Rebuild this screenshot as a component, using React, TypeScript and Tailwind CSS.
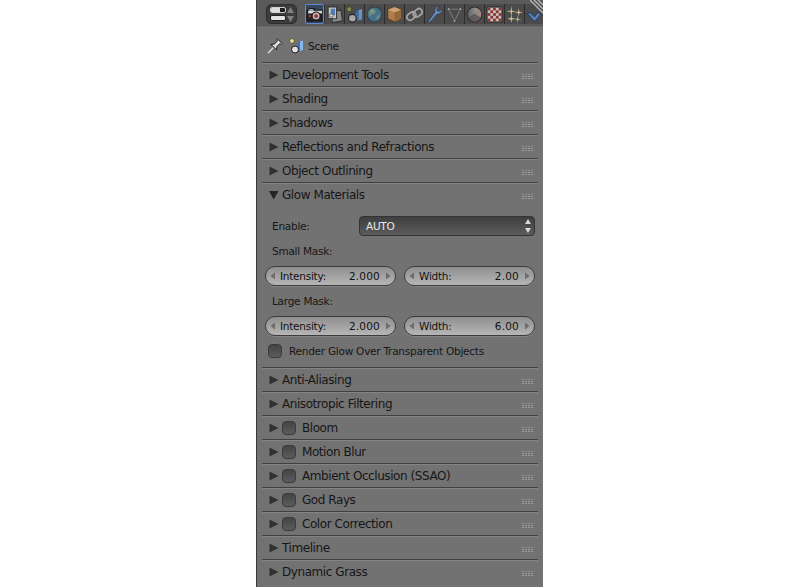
import React from "react";

const Tri = ({ open }: { open?: boolean }) => (
  <svg width="10" height="10" viewBox="0 0 10 10" className="shrink-0">
    {open ? <path d="M0 1 H9.5 L4.7 9.5 Z" fill="#262626" /> : <path d="M0.5 0.5 V9.5 L9.5 5 Z" fill="#303030" />}
  </svg>
);

const Grip = () => (
  <svg width="11" height="5" viewBox="0 0 11 5" className="shrink-0 mt-[3px]">
    {[0, 3, 6, 9].map((x) =>
      [0, 2, 4].map((y) => <rect key={x + "-" + y} x={x} y={y} width="2" height="1" fill="#a4a4a4" opacity={y === 0 ? 0.55 : 0.85} />)
    )}
  </svg>
);

const Check = ({ className = "" }: { className?: string }) => (
  <span className={"block w-[14px] h-[14px] rounded-[4px] border border-[#3a3a3a] bg-gradient-to-b from-[#444444] to-[#5c5c5c] shrink-0 " + className} />
);

const Row = ({ label, check, open }: { label: string; check?: boolean; open?: boolean }) => (
  <div className="border-t border-[#404040] shadow-[inset_0_1px_0_#848484] h-[24px] flex items-center pl-[7px] pr-[5px] mx-[5px] shrink-0">
    <Tri open={open} />
    {check ? <Check className="ml-[3px] mr-[6px]" /> : <span className="w-[3px]" />}
    <span className="text-[12px] leading-none text-[#161616] flex-1 tracking-[-0.43px] whitespace-nowrap">{label}</span>
    <Grip />
  </div>
);

const Num = ({ label, value }: { label: string; value: string }) => (
  <div className="flex-1 h-[20px] rounded-[10px] border border-[#3c3c3c] bg-gradient-to-b from-[#8f8f8f] to-[#b6b6b6] flex items-center px-[4px] text-[#111] shadow-[0_1px_0_#858585]">
    <svg width="6" height="8" viewBox="0 0 6 8" className="shrink-0"><path d="M5 0.5 V7.5 L0.5 4 Z" fill="#6c6c6c" /></svg>
    <span className="ml-[4px] flex-1 pt-[1px]">{label}</span>
    <span className="pt-[1px] tracking-[0.2px]">{value}</span>
    <svg width="6" height="8" viewBox="0 0 6 8" className="shrink-0 ml-[5px]"><path d="M1 0.5 V7.5 L5.5 4 Z" fill="#6c6c6c" /></svg>
  </div>
);

const SceneIcon = () => (
  <svg width="16" height="16" viewBox="0 0 16 16">
    <circle cx="3" cy="3" r="2.4" fill="#e4e4a0" stroke="#5a5a2c" strokeWidth="1" />
    <path d="M8 7 L10 4 L14 2.5 V12 L9 14 Z" fill="#3f70b4" />
    <path d="M11 3.6 L14 2.5 V12 L11 13 Z" fill="#8cb6e8" />
    <circle cx="6" cy="11.5" r="3.5" fill="#e0e0e0" stroke="#1c1c1c" strokeWidth="1" />
  </svg>
);

const tabs: React.ReactNode[] = [
  <g key="cam">
    <path d="M1 4 H3 V2.5 H8 V4 H15 V14 H1 Z" fill="#262626" stroke="#141414" />
    <rect x="2" y="4.5" width="13" height="2.5" fill="#d9d9d9" />
    <rect x="3" y="3" width="4" height="1.5" fill="#bbbbbb" />
    <circle cx="9.5" cy="9.5" r="3.8" fill="#d0aeb0" stroke="#161616" />
    <circle cx="9.5" cy="9.5" r="1.8" fill="#7c3a4c" />
    <rect x="2.5" y="8.5" width="2" height="2" fill="#b53a3a" />
  </g>,
  <g key="render">
    <path d="M5 5 L14 4 L15.5 14 L6 15.5 Z" fill="#8c8c8c" stroke="#333" />
    <path d="M2 1 H10 V12 H2 Z" fill="#c4c4c4" stroke="#333" />
    <rect x="4.5" y="2.5" width="4" height="6" fill="#4f7cb8" />
    <circle cx="5" cy="9" r="1.7" fill="#dcdcdc" stroke="#333" strokeWidth=".6" />
  </g>,
  <g key="scene">
    <circle cx="3" cy="3" r="2.4" fill="#87875e" stroke="#4a4a30" />
    <path d="M8.5 7 L11 4 L15 3 V12.5 L10.5 14 Z" fill="#3f6a9e" />
    <path d="M12 3.8 L15 3 V12.5 L12 13.4 Z" fill="#6e95c2" />
    <circle cx="6" cy="11.5" r="3.6" fill="#a8a8a8" stroke="#222" />
  </g>,
  <g key="world">
    <circle cx="8" cy="8" r="7" fill="#46718e" stroke="#2e4050" />
    <path d="M4 3 C7 2 10 3 9 6 C7 9 5 7 4 10 C2 8 2 5 4 3 Z" fill="#6a8a72" />
    <path d="M10 9 L13 8 L12 12 L10 13 Z" fill="#708e74" />
    <circle cx="6" cy="5" r="1.5" fill="#9fc0c8" opacity=".4" />
  </g>,
  <g key="cube">
    <path d="M8 1 L14.5 3.5 V12 L8 15 L1.5 12 V3.5 Z" fill="#b17c4c" stroke="#4c3a26" />
    <path d="M8 1 L14.5 3.5 L8 6 L1.5 3.5 Z" fill="#cda078" />
    <path d="M8 6 V15 L14.5 12 V3.5 Z" fill="#95683a" />
  </g>,
  <g key="link" fill="none" stroke="#a4a4a4" strokeWidth="1.7">
    <rect x="0.5" y="6.5" width="9" height="6" rx="3" transform="rotate(-38 5 9.5)" />
    <rect x="6.5" y="3.5" width="9" height="6" rx="3" transform="rotate(-38 11 6.5)" />
  </g>,
  <g key="wrench">
    <path d="M2 14.5 L3.5 15.5 L10.5 7.5 C13 8 15.5 6 15 3 L12.5 5 L10.5 4.5 L10.5 2.5 L12.5 0.5 C9.5 0 7.5 3 8.5 5.5 Z" fill="#6d8fba" stroke="#2f4060" strokeWidth=".8" />
  </g>,
  <g key="vert" fill="none">
    <path d="M2.5 3 H13.5 L8 14 Z" stroke="#7a7a7a" />
    <circle cx="2.5" cy="3" r="1.4" fill="#a8a8a8" stroke="#333" strokeWidth=".6" />
    <circle cx="13.5" cy="3" r="1.4" fill="#a8a8a8" stroke="#333" strokeWidth=".6" />
    <circle cx="8" cy="14" r="1.4" fill="#a8a8a8" stroke="#333" strokeWidth=".6" />
  </g>,
  <g key="mat">
    <defs>
      <linearGradient id="mg" x1="0" y1="0" x2="1" y2="0">
        <stop offset="0" stopColor="#5c5c5c" />
        <stop offset=".5" stopColor="#8a8a8a" />
        <stop offset="1" stopColor="#a88474" />
      </linearGradient>
    </defs>
    <circle cx="8" cy="8" r="7" fill="url(#mg)" stroke="#2e2e2e" />
    <path d="M2 11 A7 7 0 0 0 14 11 L8 7 Z" fill="#4e4a48" opacity=".7" />
  </g>,
  <g key="tex">
    <rect x="1" y="1" width="14" height="14" fill="#c8c0c0" stroke="#2c2c2c" />
    {[0, 1, 2, 3, 4].flatMap((x) =>
      [0, 1, 2, 3, 4].map((y) =>
        (x + y) % 2 === 0 ? <rect key={x + "." + y} x={1.5 + x * 2.6} y={1.5 + y * 2.6} width="2.6" height="2.6" fill="#8c3430" /> : null
      )
    )}
  </g>,
  <g key="part" fill="#d4c48e">
    <path d="M5 0 L5.6 4.4 L10 5 L5.6 5.6 L5 10 L4.4 5.6 L0 5 L4.4 4.4 Z" />
    <path d="M12 2 L12.6 5.4 L16 6 L12.6 6.6 L12 10 L11.4 6.6 L8 6 L11.4 5.4 Z" />
    <path d="M5 8 L5.6 11.4 L9 12 L5.6 12.6 L5 16 L4.4 12.6 L1 12 L4.4 11.4 Z" />
    <path d="M11 9 L11.5 12 L14.5 12.5 L11.5 13 L11 16 L10.5 13 L7.5 12.5 L10.5 12 Z" />
  </g>,
  <g key="phys">
    <path d="M1 7 L4 6 L8 10 L11 6 L14 8 L8 15 Z" fill="#5a80b4" stroke="#2c3f5c" />
  </g>,
];

export default function App() {
  return (
    <div className="h-[587px] w-[800px] bg-white overflow-hidden font-['DejaVu_Sans',sans-serif]">
      <div className="relative ml-[256px] w-[287px] h-[587px] bg-[#727272] border-l border-[#3a3a3a] flex flex-col">
        <div className="h-[27px] bg-[#5a5a5a] flex items-start pt-[4px] pl-[9px] overflow-hidden shrink-0 border-b border-[#686868]">
          <div className="w-[31px] h-[20px] rounded-[5px] border border-[#2e2e2e] bg-[#3c3c3c] flex items-center justify-between pl-[3px] pr-[2px] shrink-0">
            <div className="flex flex-col gap-[2px]">
              <span className="flex w-[16px] h-[6px] rounded-[2px] bg-[#1e1e1e] border border-[#cfcfcf] overflow-hidden">
                <span className="block w-[9px] bg-[#dcdcdc]" />
              </span>
              <span className="block w-[16px] h-[6px] rounded-[2px] bg-[#e2e2e2] border border-[#222]" />
            </div>
            <svg width="7" height="15" viewBox="0 0 7 15"><path d="M3.5 0 L7 6 H0 Z M3.5 15 L0 9 H7 Z" fill="#808080" /></svg>
          </div>
          <div className="flex ml-[8px]">
            {tabs.map((t, i) => (
              <div
                key={i}
                className={
                  "w-[20px] h-[20px] flex items-center justify-center shrink-0 border-r border-[#2c2c2c] " +
                  (i === 0 ? "bg-[#37465c] ring-1 ring-inset ring-[#5c8ad0] rounded-[2px]" : "bg-[#4b4b4b]")
                }
              >
                <svg width="17" height="17" viewBox="0 0 16 16">{t}</svg>
              </div>
            ))}
          </div>
        </div>
        <svg width="13" height="14" viewBox="0 0 13 14" className="absolute right-0 top-0">
          <path d="M0 0 L13 13 M4 0 L13 9 M8 0 L13 5" stroke="#b8b8b8" strokeWidth="1.3" />
        </svg>

        <div className="h-[35px] flex items-center pl-[10px] pt-[3px] shrink-0">
          <svg width="16" height="16" viewBox="0 0 16 16">
            <path d="M1 15 L6.5 9.5" stroke="#e0e0e0" strokeWidth="1.4" fill="none" />
            <path d="M4 6.5 L7.5 6 L10.5 2.5 L9.5 1.5 L10.5 0.8 L15 5.5 L14 6.5 L13 5.5 L10 8.5 L9.5 12 Z" fill="#dcdcdc" stroke="#1a1a1a" strokeWidth="1" strokeLinejoin="round" />
          </svg>
          <span className="ml-[6px] mr-[3px] flex"><SceneIcon /></span>
          <span className="text-[10.5px] tracking-[-0.25px] text-[#111] leading-none">Scene</span>
        </div>

        <Row label="Development Tools" />
        <Row label="Shading" />
        <Row label="Shadows" />
        <Row label="Reflections and Refractions" />
        <Row label="Object Outlining" />
        <Row label="Glow Materials" open />

        <div className="px-[8px] flex flex-col text-[10.5px] tracking-[-0.25px] text-[#161616] shrink-0">
          <div className="flex items-center h-[20px] mt-[10px]">
            <span className="pl-[7px] w-[94px] pt-[1px]">Enable:</span>
            <div className="flex-1 h-[20px] rounded-[4px] border border-[#333] bg-gradient-to-b from-[#3e3e3e] to-[#5c5c5c] text-[#e8e8e8] flex items-center pl-[6px] pr-[3px] justify-between">
              <span className="pt-[1px]">AUTO</span>
              <svg width="6" height="14" viewBox="0 0 6 14"><path d="M3 0 L6 5 H0 Z M3 14 L0 9 H6 Z" fill="#d8d8d8" /></svg>
            </div>
          </div>
          <div className="h-[30px] flex items-center pl-[7px] pt-[2px]">Small Mask:</div>
          <div className="flex gap-[8px]">
            <Num label="Intensity:" value="2.000" />
            <Num label="Width:" value="2.00" />
          </div>
          <div className="h-[30px] flex items-center pl-[7px] pt-[2px]">Large Mask:</div>
          <div className="flex gap-[8px]">
            <Num label="Intensity:" value="2.000" />
            <Num label="Width:" value="6.00" />
          </div>
          <div className="flex items-center h-[20px] mt-[5px] pl-[3px]">
            <Check />
            <span className="ml-[7px] pt-[1px] whitespace-nowrap">Render Glow Over Transparent Objects</span>
          </div>
        </div>
        <div className="h-[6px] shrink-0" />

        <Row label="Anti-Aliasing" />
        <Row label="Anisotropic Filtering" />
        <Row label="Bloom" check />
        <Row label="Motion Blur" check />
        <Row label="Ambient Occlusion (SSAO)" check />
        <Row label="God Rays" check />
        <Row label="Color Correction" check />
        <Row label="Timeline" />
        <Row label="Dynamic Grass" />
      </div>
    </div>
  );
}
